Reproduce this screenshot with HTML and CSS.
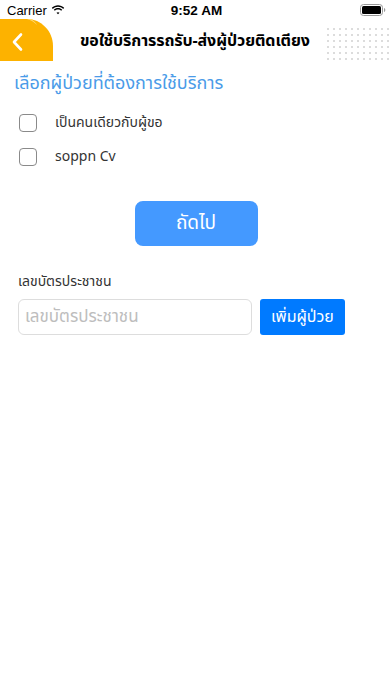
FILE: index.html
```html
<!DOCTYPE html>
<html lang="th">
<head>
<meta charset="utf-8">
<meta name="viewport" content="width=device-width, initial-scale=1">
<link rel="stylesheet" href="styles.css">
</head>
<body>
<div class="status">
  <div class="status-left">
    <span class="carrier">Carrier</span>
    <svg class="wifi" width="14" height="10" viewBox="0 0 17 12"><path d="M8.5 2.2c2.4 0 4.6.9 6.3 2.5l1.2-1.3C13.9 1.4 11.3.3 8.5.3S3.1 1.4 1 3.4l1.2 1.3c1.7-1.6 3.9-2.5 6.3-2.5z" fill="#000"/><path d="M8.5 5.5c1.5 0 2.9.6 3.9 1.5l1.2-1.3C12.3 4.4 10.5 3.6 8.5 3.6S4.7 4.4 3.4 5.7L4.6 7c1-.9 2.4-1.5 3.9-1.5z" fill="#000"/><path d="M8.5 8.6c.7 0 1.3.3 1.8.7L8.5 11.3 6.7 9.3c.5-.4 1.1-.7 1.8-.7z" fill="#000"/></svg>
  </div>
  <div class="time">9:52 AM</div>
  <div class="status-right">
    <svg class="battery" width="26" height="12" viewBox="0 0 26 12"><rect x="0.5" y="0.5" width="22" height="11" rx="3" fill="none" stroke="#999" /><rect x="2" y="2" width="19" height="8" rx="1.5" fill="#000"/><path d="M24 4v4c.8-.3 1.3-1 1.3-2s-.5-1.7-1.3-2z" fill="#999"/></svg>
  </div>
</div>

<header class="header">
  <div class="back">
    <svg class="blob" width="56" height="42" viewBox="0 0 56 42"><path d="M0 0h27c14 0 26 12 26 27v15H0z" fill="#fdb200"/><path d="M27 0h4c3 2 5 4 6 6-3-3-6-5-10-6z" fill="#ffd86a"/><path d="M21 15.5 14 23l7 7.5" fill="none" stroke="#fff" stroke-width="2.6" stroke-linecap="round" stroke-linejoin="round"/></svg>
  </div>
  <h1 class="title">ขอใช้บริการรถรับ-ส่งผู้ป่วยติดเตียง</h1>
  <div class="dots"></div>
</header>

<main class="content">
  <h2 class="section-title">เลือกผู้ป่วยที่ต้องการใช้บริการ</h2>
  <ul class="choices">
    <li class="choice"><span class="box"></span><span class="choice-label">เป็นคนเดียวกับผู้ขอ</span></li>
    <li class="choice"><span class="box"></span><span class="choice-label">soppn Cv</span></li>
  </ul>
  <div class="next-wrap"><button class="next">ถัดไป</button></div>
  <label class="field-label">เลขบัตรประชาชน</label>
  <div class="add-row">
    <input class="id-input" type="text" placeholder="เลขบัตรประชาชน">
    <button class="add">เพิ่มผู้ป่วย</button>
  </div>
</main>
</body>
</html>
```
FILE: styles.css
```css
* { box-sizing: border-box; }
html, body { margin: 0; padding: 0; background: #fff; }
body {
  width: 392px;
  height: 696px;
  overflow: hidden;
  font-family: "Noto Sans Thai", "Liberation Sans", "DejaVu Sans", sans-serif;
  color: #222;
}
.status {
  height: 19px;
  display: grid;
  grid-template-columns: 1fr auto 1fr;
  align-items: center;
  padding: 1px 6px 0 7px;
  font-family: "Liberation Sans", sans-serif;
  font-size: 13px;
}
.status-left { display: flex; align-items: center; gap: 4px; }
.carrier { color: #000; }
.time { font-weight: 600; color: #000; font-size: 13.5px; }
.status-right { display: flex; justify-content: flex-end; padding-right: 0; }
.header {
  height: 45px;
  display: flex;
  align-items: flex-start;
  position: relative;
}
.back { width: 56px; height: 42px; flex: none; }
.blob { display: block; }
.title {
  flex: 1;
  margin: 0;
  font-size: 16px;
  letter-spacing: -0.1px;
  font-weight: 700;
  color: #000;
  text-align: left;
  padding-left: 24px;
  line-height: 44px;
  white-space: nowrap;
  position: relative;
  z-index: 1;
}
.dots {
  position: absolute;
  right: 0;
  top: 6px;
  width: 68px;
  height: 38px;
  background-image: radial-gradient(circle, #dcdcdc 0 1px, transparent 1.2px);
  background-size: 6px 6px;
  background-position: 1px 1px;
}
.content { padding: 0 18px; }
.section-title {
  margin: 7px 0 0 -4px;
  font-size: 18px;
  font-weight: 400;
  color: #4a9be8;
  line-height: 26px;
}
.choices { list-style: none; margin: 17px 0 0; padding: 0; display: flex; flex-direction: column; gap: 17px; }
.choice { display: flex; align-items: center; height: 17px; }
.box {
  width: 18px; height: 18px;
  border: 1.5px solid #8a8a8a;
  border-radius: 4px;
  margin-left: 1px;
  flex: none;
}
.choice-label { margin-left: 18px; font-size: 14px; color: #333; }
.next-wrap { display: flex; justify-content: center; margin-top: 36px; }
.next {
  width: 123px; height: 45px;
  border: none; border-radius: 8px;
  background: #4499ff;
  color: #fff;
  font-family: inherit;
  font-size: 19px;
}
.field-label { display: block; margin-top: 27px; font-size: 14px; color: #333; line-height: 18px; }
.add-row { display: flex; align-items: center; gap: 8px; margin-top: 8px; }
.id-input {
  width: 234px; height: 36px;
  border: 1px solid #ddd;
  border-radius: 6px;
  padding: 0 6px;
  font-family: inherit;
  font-size: 17px;
  color: #222;
  outline: none;
}
.id-input::placeholder { color: #bdbdbd; }
.add {
  width: 85px; height: 36px;
  border: none; border-radius: 3px;
  background: #007aff;
  color: #fff;
  font-family: inherit;
  font-size: 16px;
}
```
